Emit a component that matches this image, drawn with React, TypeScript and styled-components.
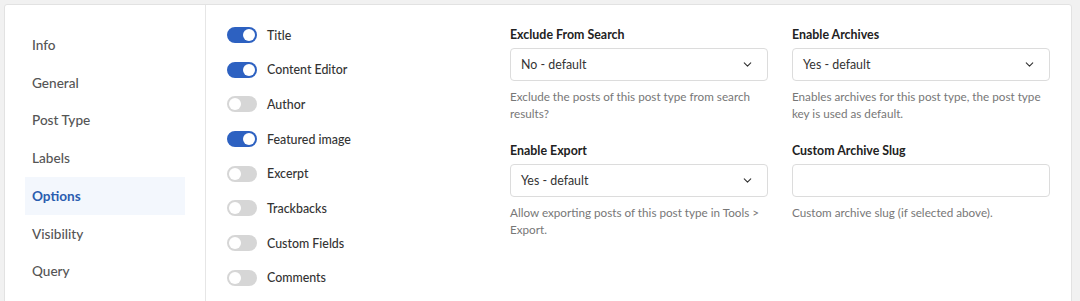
import React, { useState } from 'react';
import styled, { createGlobalStyle } from 'styled-components';
import { ChevronDown } from 'lucide-react';

const GlobalStyle = createGlobalStyle`
  body {
    margin: 0;
    padding: 4px 8px 0 4px;
    background: #f1f1f1;
    font-family: Lato, "Open Sans", sans-serif;
    color: #333;
  }
`;

const Card = styled.div`
  display: flex;
  background: #fff;
  border: 1px solid #e2e2e2;
  border-radius: 3px;
  min-height: 320px;
`;

const Sidebar = styled.nav`
  box-sizing: border-box;
  width: 201px;
  flex-shrink: 0;
  padding: 21px 20px;
  border-right: 1px solid #e6e6e6;
`;

const NavItem = styled.div<{ $active?: boolean }>`
  height: 37.75px;
  display: flex;
  align-items: center;
  padding-left: 7px;
  font-size: 13.6px;
  font-weight: ${(p) => (p.$active ? 700 : 500)};
  color: ${(p) => (p.$active ? '#2a5db0' : '#555')};
  background: ${(p) => (p.$active ? '#f3f7fd' : 'transparent')};
`;

const Content = styled.div`
  display: grid;
  grid-template-columns: 259px 258px 258px;
  column-gap: 24px;
  padding: 21px 21px;
  align-items: start;
`;

const ToggleList = styled.div`
  display: flex;
  flex-direction: column;
  gap: 16.7px;
`;

const ToggleRow = styled.label`
  display: flex;
  align-items: center;
  gap: 10px;
  height: 18px;
  font-size: 12.4px;
  font-weight: 500;
  color: #333;
  cursor: pointer;
`;

const Track = styled.span<{ $on: boolean }>`
  position: relative;
  width: 30px;
  height: 16px;
  border-radius: 8px;
  background: ${(p) => (p.$on ? '#2d61c1' : '#d6d6d6')};
  flex-shrink: 0;
`;

const Knob = styled.span<{ $on: boolean }>`
  position: absolute;
  top: 2px;
  left: ${(p) => (p.$on ? '16px' : '2px')};
  width: 12px;
  height: 12px;
  border-radius: 50%;
  background: #fff;
`;

const FieldColumn = styled.div`
  display: flex;
  flex-direction: column;
  gap: 21px;
`;

const Field = styled.div`
  display: flex;
  flex-direction: column;
`;

const Label = styled.div`
  font-size: 12.4px;
  font-weight: 700;
  line-height: 17px;
  color: #222;
  margin-bottom: 5px;
`;

const SelectBox = styled.div`
  box-sizing: border-box;
  height: 33px;
  border: 1px solid #dcdcdc;
  border-radius: 4px;
  display: flex;
  align-items: center;
  justify-content: space-between;
  padding: 0 13px 0 10px;
  font-size: 12.4px;
  color: #333;
`;

const TextInput = styled.input`
  box-sizing: border-box;
  height: 33px;
  border: 1px solid #dcdcdc;
  border-radius: 4px;
  padding: 0 10px;
  font: inherit;
  font-size: 12.4px;
  outline: none;
`;

const Help = styled.div`
  margin-top: 7px;
  font-size: 11.7px;
  line-height: 16.5px;
  color: #777;
  min-height: 33px;
`;

const toggles: [string, boolean][] = [
  ['Title', true],
  ['Content Editor', true],
  ['Author', false],
  ['Featured image', true],
  ['Excerpt', false],
  ['Trackbacks', false],
  ['Custom Fields', false],
  ['Comments', false],
];

const navItems = ['Info', 'General', 'Post Type', 'Labels', 'Options', 'Visibility', 'Query'];

function Toggle({ label, initial }: { label: string; initial: boolean }) {
  const [on, setOn] = useState(initial);
  return (
    <ToggleRow onClick={() => setOn(!on)}>
      <Track $on={on}>
        <Knob $on={on} />
      </Track>
      {label}
    </ToggleRow>
  );
}

function Select({ value }: { value: string }) {
  return (
    <SelectBox>
      {value}
      <ChevronDown size={13} strokeWidth={2} color="#333" />
    </SelectBox>
  );
}

export default function App() {
  return (
    <>
      <GlobalStyle />
      <Card>
        <Sidebar>
          {navItems.map((n) => (
            <NavItem key={n} $active={n === 'Options'}>
              {n}
            </NavItem>
          ))}
        </Sidebar>
        <Content>
          <ToggleList>
            {toggles.map(([l, v]) => (
              <Toggle key={l} label={l} initial={v} />
            ))}
          </ToggleList>
          <FieldColumn>
            <Field>
              <Label>Exclude From Search</Label>
              <Select value="No - default" />
              <Help>Exclude the posts of this post type from search results?</Help>
            </Field>
            <Field>
              <Label>Enable Export</Label>
              <Select value="Yes - default" />
              <Help>Allow exporting posts of this post type in Tools &gt; Export.</Help>
            </Field>
          </FieldColumn>
          <FieldColumn>
            <Field>
              <Label>Enable Archives</Label>
              <Select value="Yes - default" />
              <Help>Enables archives for this post type, the post type key is used as default.</Help>
            </Field>
            <Field>
              <Label>Custom Archive Slug</Label>
              <TextInput />
              <Help>Custom archive slug (if selected above).</Help>
            </Field>
          </FieldColumn>
        </Content>
      </Card>
    </>
  );
}
